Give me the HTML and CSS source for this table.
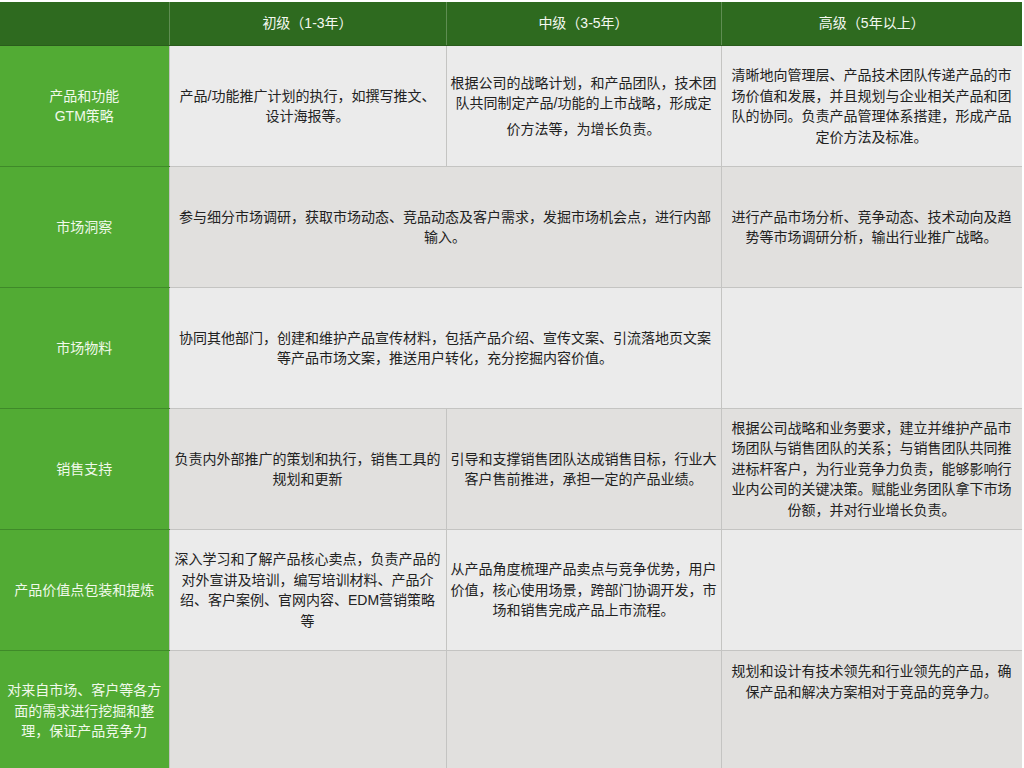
FILE: index.html
```html
<!DOCTYPE html>
<html lang="zh-CN">
<head>
<meta charset="utf-8">
<title>产品市场岗位能力</title>
<link rel="stylesheet" href="styles.css">
</head>
<body>
<div class="page">
<table class="grid">
  <colgroup>
    <col class="c-label">
    <col class="c-junior">
    <col class="c-mid">
    <col class="c-senior">
  </colgroup>
  <thead>
    <tr class="head">
      <th class="corner"></th>
      <th>初级（1-3年）</th>
      <th>中级（3-5年）</th>
      <th>高级（5年以上）</th>
    </tr>
  </thead>
  <tbody>
    <tr class="light">
      <th class="label">产品和功能<br>GTM策略</th>
      <td>产品/功能推广计划的执行，如撰写推文、<br>设计海报等。</td>
      <td>根据公司的战略计划，和产品团队，技术团<br>队共同制定产品/功能的上市战略，形成定<br><span class="gap">价方法等，为增长负责。</span></td>
      <td>清晰地向管理层、产品技术团队传递产品的市<br>场价值和发展，并且规划与企业相关产品和团<br>队的协同。负责产品管理体系搭建，形成产品<br>定价方法及标准。</td>
    </tr>
    <tr class="dark">
      <th class="label">市场洞察</th>
      <td colspan="2" class="wide">参与细分市场调研，获取市场动态、竞品动态及客户需求，发掘市场机会点，进行内部<br>输入。</td>
      <td>进行产品市场分析、竞争动态、技术动向及趋<br>势等市场调研分析，输出行业推广战略。</td>
    </tr>
    <tr class="light">
      <th class="label">市场物料</th>
      <td colspan="2" class="wide">协同其他部门，创建和维护产品宣传材料，包括产品介绍、宣传文案、引流落地页文案<br>等产品市场文案，推送用户转化，充分挖掘内容价值。</td>
      <td></td>
    </tr>
    <tr class="dark">
      <th class="label">销售支持</th>
      <td>负责内外部推广的策划和执行，销售工具的<br>规划和更新</td>
      <td>引导和支撑销售团队达成销售目标，行业大<br>客户售前推进，承担一定的产品业绩。</td>
      <td>根据公司战略和业务要求，建立并维护产品市<br>场团队与销售团队的关系；与销售团队共同推<br>进标杆客户，为行业竞争力负责，能够影响行<br>业内公司的关键决策。赋能业务团队拿下市场<br>份额，并对行业增长负责。</td>
    </tr>
    <tr class="light">
      <th class="label">产品价值点包装和提炼</th>
      <td>深入学习和了解产品核心卖点，负责产品的<br>对外宣讲及培训，编写培训材料、产品介<br>绍、客户案例、官网内容、EDM营销策略<br>等</td>
      <td>从产品角度梳理产品卖点与竞争优势，用户<br>价值，核心使用场景，跨部门协调开发，市<br>场和销售完成产品上市流程。</td>
      <td></td>
    </tr>
    <tr class="dark">
      <th class="label">对来自市场、客户等各方面的需求进行挖掘和整理，保证产品竞争力</th>
      <td></td>
      <td></td>
      <td class="top">规划和设计有技术领先和行业领先的产品，确<br>保产品和解决方案相对于竞品的竞争力。</td>
    </tr>
  </tbody>
</table>
</div>
</body>
</html>
```

FILE: styles.css
```css
html, body {
  margin: 0;
  padding: 0;
  background: #ffffff;
}

.page {
  padding-top: 2px;
  width: 1022px;
  overflow: hidden;
}

.grid {
  width: 1022px;
  table-layout: fixed;
  border-collapse: collapse;
  font-family: "Liberation Sans", "Noto Sans CJK SC", sans-serif;
  font-size: 14px;
  line-height: 20.5px;
  color: #222222;
}

.c-label { width: 169px; }
.c-junior { width: 277px; }
.c-mid { width: 275px; }
.c-senior { width: 301px; }

.head th {
  height: 43px;
  padding: 0;
  background: #2e6a1f;
  color: #f4f8f0;
  font-weight: normal;
  text-align: center;
  border-left: 1px solid #5f8d52;
  border-bottom: 1px solid #2a5c1c;
}

.head th.corner {
  border-left: none;
}

tbody tr {
  height: 121px;
}

tbody td {
  padding: 0 2px;
  text-align: center;
  vertical-align: middle;
  white-space: nowrap;
  border: 1px solid #c4c4c2;
}

tbody td:last-child {
  border-right: 1px solid #b8b8b6;
}

.light td { background: #ebebeb; }
.dark td { background: #e1e0de; }

.label {
  background: #52ab34;
  color: #f0f9ea;
  font-weight: normal;
  text-align: center;
  vertical-align: middle;
  padding: 0 6px;
  border-top: 1px solid #3f8a29;
  border-bottom: 1px solid #3f8a29;
  border-right: 1px solid #c4c4c2;
}

.gap {
  display: inline-block;
  margin-top: 5px;
}

tbody td.top {
  vertical-align: top;
  padding-top: 10px;
}
```
